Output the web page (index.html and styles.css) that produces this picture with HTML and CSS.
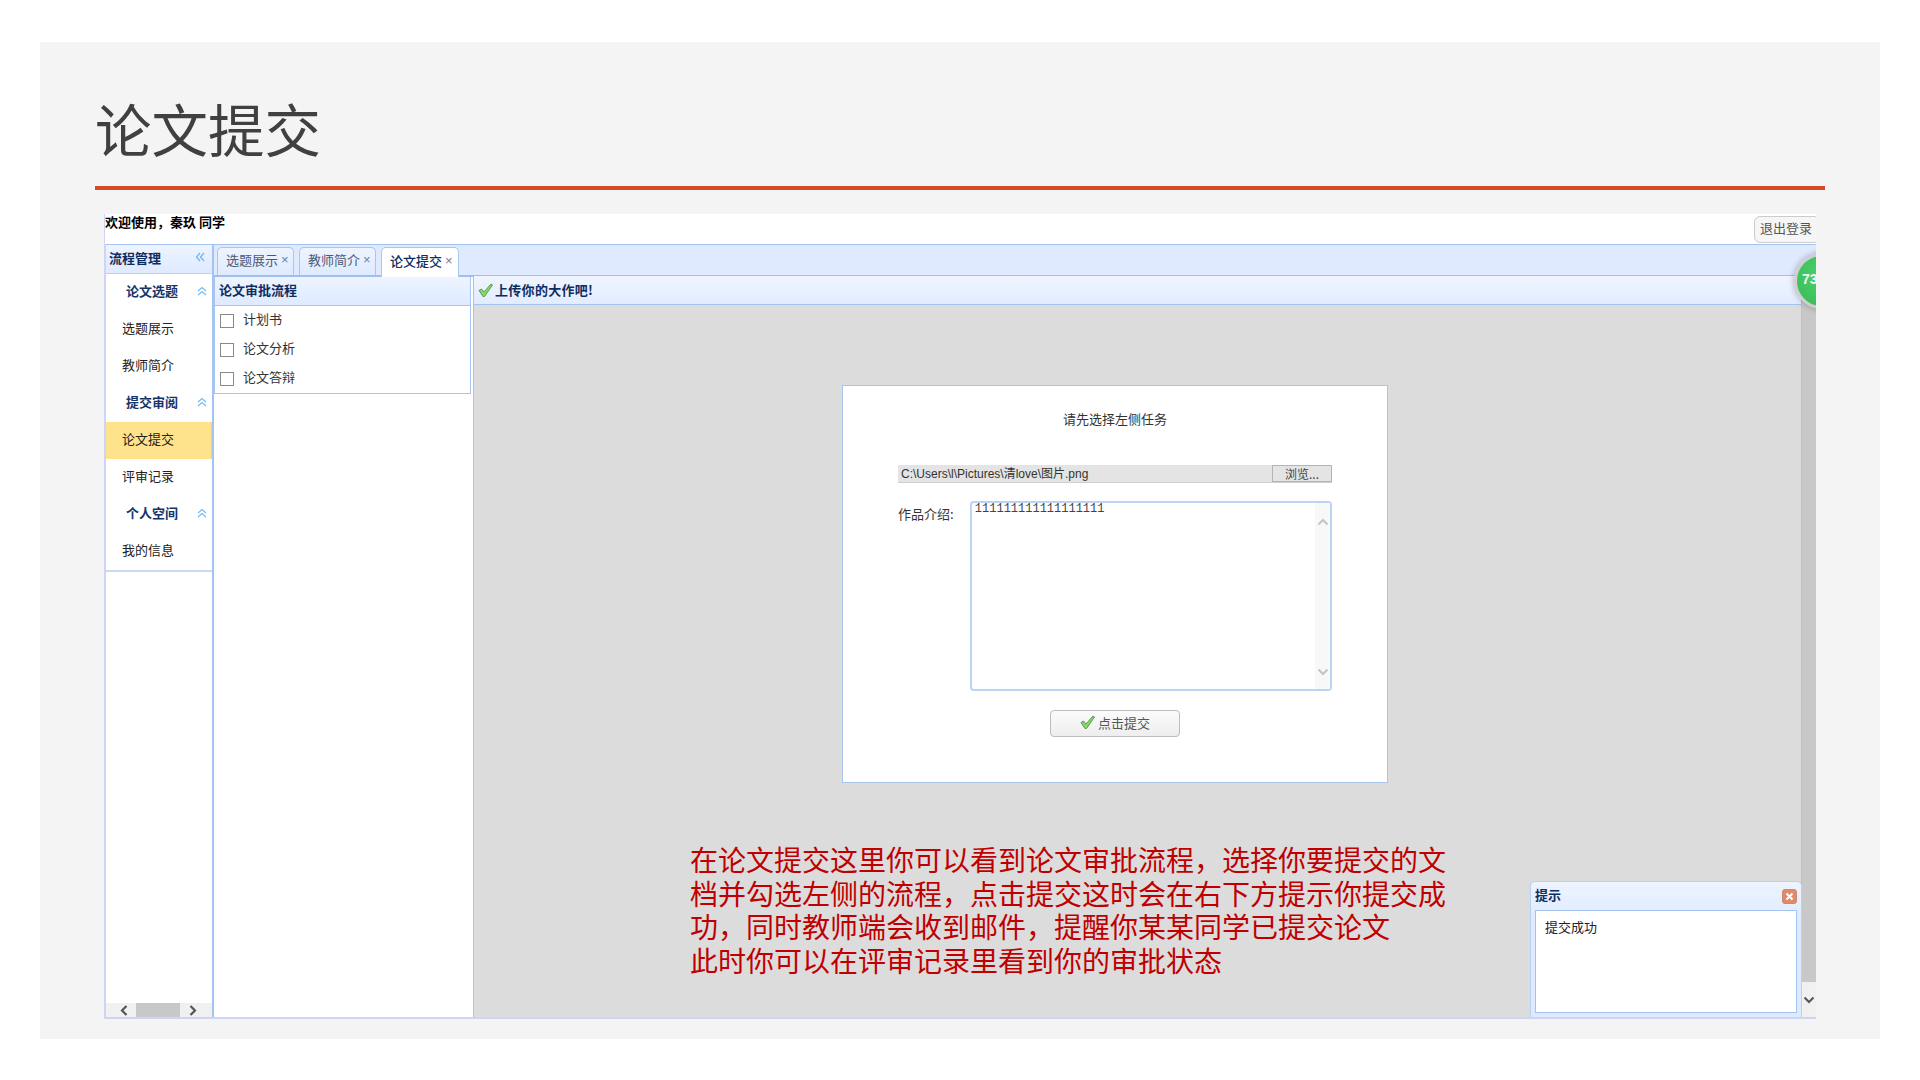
FILE: index.html
```html
<!DOCTYPE html>
<html lang="zh-CN">
<head>
<meta charset="utf-8">
<title>论文提交</title>
<link rel="stylesheet" href="styles.css">
</head>
<body>
<main class="slide">
  <h1 class="slide-title">论文提交</h1>
  <div class="rule"></div>
  <div class="app">
    <header class="topbar">
      <span class="welcome">欢迎使用，秦玖 同学</span>
      <button class="logout">退出登录</button>
    </header>
    <div class="main">
      <aside class="sidebar">
        <div class="side-head">
          <span>流程管理</span>
          <svg class="icon-collapse" width="10" height="10" viewBox="0 0 10 10"><path d="M5 1 1.5 5 5 9M9 1 5.5 5 9 9" fill="none" stroke="#6fb0f0" stroke-width="1.2"/></svg>
        </div>
        <nav class="side-nav">
          <div class="group">论文选题<svg class="chev" width="10" height="10" viewBox="0 0 10 10"><path d="M1 5 5 1.5 9 5M1 9 5 5.5 9 9" fill="none" stroke="#70bdf5" stroke-width="1.2"/></svg></div>
          <div class="item">选题展示</div>
          <div class="item">教师简介</div>
          <div class="group">提交审阅<svg class="chev" width="10" height="10" viewBox="0 0 10 10"><path d="M1 5 5 1.5 9 5M1 9 5 5.5 9 9" fill="none" stroke="#70bdf5" stroke-width="1.2"/></svg></div>
          <div class="item active">论文提交</div>
          <div class="item">评审记录</div>
          <div class="group">个人空间<svg class="chev" width="10" height="10" viewBox="0 0 10 10"><path d="M1 5 5 1.5 9 5M1 9 5 5.5 9 9" fill="none" stroke="#70bdf5" stroke-width="1.2"/></svg></div>
          <div class="item">我的信息</div>
        </nav>
        <div class="hscroll">
          <div class="hs-btn hs-left"><svg width="8" height="11" viewBox="0 0 8 11"><path d="M6.500 1 2 5.500 6.500 10" fill="none" stroke="#555" stroke-width="2.200"/></svg></div>
          <div class="hs-thumb"></div>
          <div class="hs-btn hs-right"><svg width="8" height="11" viewBox="0 0 8 11"><path d="M1.500 1 6 5.500 1.500 10" fill="none" stroke="#555" stroke-width="2.200"/></svg></div>
        </div>
      </aside>
      <section class="content">
        <div class="tabs">
          <div class="tab">选题展示<span class="tab-x">×</span></div>
          <div class="tab">教师简介<span class="tab-x">×</span></div>
          <div class="tab current">论文提交<span class="tab-x">×</span></div>
        </div>
        <div class="workspace">
          <div class="tree-col">
            <div class="tree-card">
              <div class="tree-head">论文审批流程</div>
              <ul class="tree-list">
                <li><span class="box"></span><span class="tree-label">计划书</span></li>
                <li><span class="box"></span><span class="tree-label">论文分析</span></li>
                <li><span class="box"></span><span class="tree-label">论文答辩</span></li>
              </ul>
            </div>
          </div>
          <div class="stage">
            <div class="stage-main">
              <div class="stage-head">
                <svg width="15" height="14" viewBox="0 0 15 14"><path d="M1 7.500 3.500 6 6 9 13 1l1.500 1L6.500 13.500h-1.500z" fill="#8ad85c" stroke="#4c8f5c" stroke-width=".9"/></svg>
                <span class="stage-label">上传你的大作吧!</span>
              </div>
              <div class="stage-body">
                <div class="dialog">
                  <div class="dialog-title">请先选择左侧任务</div>
                  <div class="file-row">
                    <span class="file-path">C:\Users\l\Pictures\清love\图片.png</span>
                    <span class="file-btn">浏览...</span>
                  </div>
                  <div class="intro-row">
                    <label class="intro-label">作品介绍:</label>
                    <div class="textbox">
                      <div class="textbox-text">111111111111111111</div>
                      <div class="textbox-scroll">
                        <svg width="12" height="8" viewBox="0 0 12 8"><path d="M1.500 6.500 6 2l4.500 4.500" fill="none" stroke="#c4c4c4" stroke-width="2"/></svg>
                        <svg width="12" height="8" viewBox="0 0 12 8"><path d="M1.500 1.500 6 6l4.500-4.500" fill="none" stroke="#c4c4c4" stroke-width="2"/></svg>
                      </div>
                    </div>
                  </div>
                  <button class="submit">
                    <svg width="15" height="14" viewBox="0 0 15 14"><path d="M1 7.500 3.500 6 6 9 13 1l1.500 1L6.500 13.500h-1.500z" fill="#8ad85c" stroke="#4c8f5c" stroke-width=".9"/></svg>
                    点击提交
                  </button>
                </div>
              </div>
            </div>
            <div class="vscroll">
              <div class="vs-track"></div>
              <div class="vs-btn"><svg width="12" height="8" viewBox="0 0 12 8"><path d="M1.500 1.500 6 6l4.500-4.500" fill="none" stroke="#555" stroke-width="2"/></svg></div>
            </div>
            <p class="note">在论文提交这里你可以看到论文审批流程，选择你要提交的文<br>档并勾选左侧的流程，点击提交这时会在右下方提示你提交成<br>功，同时教师端会收到邮件，提醒你某某同学已提交论文<br>此时你可以在评审记录里看到你的审批状态</p>
            <div class="toast">
              <div class="toast-head">
                <span class="toast-title">提示</span>
                <span class="toast-close"><svg width="9" height="9" viewBox="0 0 9 9"><path d="M1.500 1.500 7.500 7.500M7.500 1.500 1.500 7.500" stroke="#fff" stroke-width="2"/></svg></span>
              </div>
              <div class="toast-body">提交成功</div>
            </div>
          </div>
        </div>
      </section>
    </div>
    <div class="badge">73</div>
  </div>
</main>
</body>
</html>
```

FILE: styles.css
```css
* { box-sizing: border-box; }
html, body { margin: 0; height: 100%; background: #fff; }
body {
  padding: 42px 40px 41px;
  font-family: "Noto Sans CJK SC", "Liberation Sans", sans-serif;
  font-size: 13px;
  color: #222;
  overflow: hidden;
}
.slide {
  height: 997px;
  background: #f4f4f4;
  padding: 0 55px;
}
.slide-title {
  margin: 0;
  height: 144px;
  padding: 52px 0 0;
  font-size: 56.500px;
  line-height: 66px;
  font-weight: 400;
  color: #404040;
}
.rule { height: 4px; background: #d44a27; }
.app {
  position: relative;
  overflow: hidden;
  margin: 24px 9px 0;
  height: 805px;
  display: flex;
  flex-direction: column;
}
.topbar {
  height: 30px;
  flex: none;
  background: #fff;
  display: flex;
  justify-content: space-between;
  align-items: flex-start;
  padding: 0;
  border-left: 1px solid #d0d4f4;
}
.welcome { font-weight: 700; color: #000; line-height: 15px; }
.logout {
  width: 66px;
  height: 27px;
  margin: 2px -4px 0 0;
  text-align: left;
  padding: 0 0 4px 5px;
  background: #f6f6f6;
  border: 1px solid #ccc;
  border-radius: 6px;
  font: inherit;
  color: #555;
}
.main {
  flex: 1;
  min-height: 0;
  display: flex;
  border-left: 2px solid #d0d4f4;
  border-bottom: 2px solid #d0d4f4;
}
.sidebar {
  width: 108px;
  flex: none;
  display: flex;
  flex-direction: column;
  background: #fff;
  border-right: 2px solid #a3c4ee;
}
.side-head {
  height: 30px;
  flex: none;
  border-top: 1px solid #a3c4ee;
  border-bottom: 1px solid #b8d0f2;
  background: linear-gradient(#eef4ff, #dfeaff);
  display: flex;
  align-items: center;
  justify-content: space-between;
  padding: 0 7px 4px 3px;
  font-weight: 700;
  color: #0e2d5f;
}
.side-nav { border-bottom: 2px solid #c8daf4; }
.group, .item { height: 37px; display: flex; align-items: center; }
.group { padding: 0 5px 4px 20px; justify-content: space-between; font-weight: 700; color: #16346c; }
.item { padding: 0 0 4px 16px; color: #222; }
.item.active { background: #ffe28c; border-right: 1px solid #f5cf7a; }
.hscroll {
  margin-top: auto;
  height: 14px;
  flex: none;
  background: #f0f0f0;
  display: flex;
  align-items: center;
}
.hs-btn { height: 14px; display: flex; align-items: center; }
.hs-left { width: 30px; padding-left: 14px; }
.hs-right { width: 32px; padding-left: 9px; }
.hs-thumb { width: 44px; height: 14px; background: #c8c8c8; }
.content { flex: 1; min-width: 0; display: flex; flex-direction: column; }
.tabs {
  height: 33px;
  flex: none;
  display: flex;
  gap: 5px;
  align-items: flex-end;
  padding-left: 3px;
  background: #dfeaff;
  border-top: 1px solid #a3c4ee;
  border-bottom: 2px solid #9fc0ee;
}
.tab {
  width: 77px;
  height: 28px;
  padding: 0 0 5px 8px;
  display: flex;
  align-items: center;
  gap: 3px;
  border: 1px solid #a9c6ee;
  border-bottom: 0;
  border-radius: 5px 5px 0 0;
  background: linear-gradient(#eef4ff, #dfeaff);
  color: #4b5a76;
}
.tab.current { background: #fff; color: #0e2d5f; font-weight: 500; margin-bottom: -2px; height: 30px; width: 78px; padding-bottom: 5px; }
.tab-x { color: #6e7e9c; font-size: 13px; line-height: 1; font-family: "Liberation Sans", sans-serif; }
.workspace { flex: 1; min-height: 0; display: flex; }
.tree-col { width: 260px; flex: none; background: #fff; border-right: 1px solid #a9c4ea; padding-right: 2px; }
.tree-card { border: 1px solid #a9c6ee; border-top: 0; }
.tree-head {
  height: 29px;
  border-bottom: 1px solid #a9c6ee;
  background: linear-gradient(#eef4ff, #dfeaff);
  display: flex;
  align-items: center;
  padding: 0 0 4px 4px;
  font-weight: 700;
  color: #0e2d5f;
}
.tree-list { list-style: none; margin: 0; padding: 0; }
.tree-list li { height: 29px; display: flex; align-items: center; padding-left: 5px; color: #333; }
.tree-label { position: relative; top: -2px; }
.box { width: 14px; height: 14px; border: 1px solid #888; margin-right: 9px; background: #fff; }
.stage { position: relative; flex: 1; min-width: 0; display: flex; }
.stage-main { flex: 1; min-width: 0; display: flex; flex-direction: column; border-right: 1px solid #a9c4ea; }
.stage-head {
  height: 29px;
  flex: none;
  margin-top: -1px;
  border-bottom: 1px solid #a3c4ee;
  background: linear-gradient(#f0f5ff, #e2ecff);
  display: flex;
  align-items: center;
  gap: 2px;
  padding-left: 4px;
  font-weight: 700;
  color: #0e2d5f;
}
.stage-label { position: relative; top: -1px; letter-spacing: .3px; }
.stage-body { flex: 1; min-height: 0; background: #dcdcdc; padding: 80px 0 0 368px; }
.dialog {
  width: 546px;
  height: 398px;
  background: #fff;
  border: 1px solid #a9c4ea;
  padding: 24px 55px 0;
  display: flex;
  flex-direction: column;
}
.dialog-title { height: 20px; line-height: 18px; text-align: center; color: #333; }
.file-row {
  margin-top: 35px;
  height: 18px;
  display: flex;
  background: #e4e4e4;
  border-bottom: 1px solid #cfcfcf;
  font-size: 12px;
  line-height: 18px;
  color: #333;
}
.file-path { flex: 1; padding-left: 3px; font-family: "Liberation Sans", "Noto Sans CJK SC", sans-serif; }
.file-btn { width: 60px; border: 1px solid #b4b4b4; line-height: 16px; text-align: center; color: #444; }
.intro-row { margin-top: 18px; display: flex; }
.intro-label { width: 72px; padding-top: 3px; line-height: 20px; color: #333; }
.textbox {
  width: 363px;
  height: 190px;
  border: 2px solid #bcd4f4;
  border-radius: 4px;
  display: flex;
  justify-content: space-between;
}
.textbox-text { padding-left: 3px; font-family: "Liberation Mono", monospace; font-size: 12px; line-height: 12px; color: #444; }
.textbox-scroll {
  width: 15px;
  background: #f8f8f8;
  display: flex;
  flex-direction: column;
  align-items: center;
  justify-content: space-between;
  padding: 15px 0 13px;
}
.submit {
  margin: 19px auto 0;
  width: 130px;
  height: 27px;
  padding: 0 0 3px;
  background: linear-gradient(#fbfbfb, #eeeeee);
  border: 1px solid #bdbdbd;
  border-radius: 4px;
  display: flex;
  align-items: center;
  justify-content: center;
  gap: 3px;
  font: inherit;
  color: #555;
}
.vscroll { width: 14px; flex: none; display: flex; flex-direction: column; margin-top: -1px; }
.vs-track { flex: 1; background: #c8c8c8; }
.vs-btn { height: 35px; background: #f0f0f0; display: flex; align-items: center; justify-content: center; }
.note {
  position: absolute;
  left: 216px;
  top: 566px;
  margin: 0;
  font-size: 28px;
  line-height: 33.500px;
  color: #c00000;
  white-space: nowrap;
}
.toast {
  position: absolute;
  right: 14px;
  bottom: 0;
  width: 272px;
  height: 136px;
  border: 1px solid #b8d0f2;
  border-bottom: 0;
  border-radius: 5px 5px 0 0;
  background: linear-gradient(#eef4ff, #dfeaff 30%);
  padding: 0 4px 4px;
  display: flex;
  flex-direction: column;
}
.toast-head {
  height: 28px;
  flex: none;
  display: flex;
  align-items: center;
  justify-content: space-between;
  font-weight: 700;
  color: #0e2d5f;
}
.toast-title { position: relative; top: -2px; }
.toast-close {
  width: 15px;
  height: 15px;
  border-radius: 3px;
  background: #e08a68;
  border: 1px solid #c9896f;
  display: flex;
  align-items: center;
  justify-content: center;
}
.toast-body { flex: 1; background: #fff; border: 1px solid #a3c4ee; padding: 6px 9px; line-height: 20px; color: #222; }
.badge {
  position: absolute;
  left: 1690px;
  top: 39px;
  width: 56px;
  height: 56px;
  border-radius: 50%;
  background: radial-gradient(circle at 50% 40%, #4fd06c, #33bb55);
  border: 3px solid #cfcfcf;
  box-shadow: 0 0 6px rgba(0, 0, 0, .3);
  padding-left: 5px;
  line-height: 46px;
  font-family: "Liberation Sans", sans-serif;
  font-size: 14px;
  font-weight: 700;
  color: #f2f2f2;
}
```
